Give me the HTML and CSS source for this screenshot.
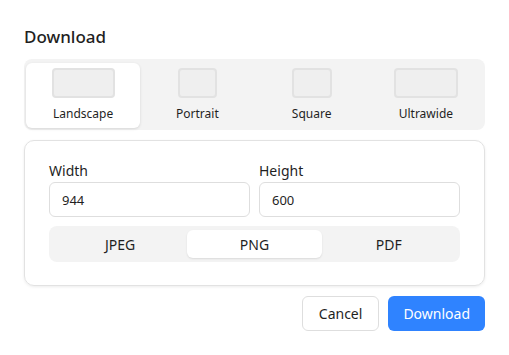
FILE: index.html
```html
<!DOCTYPE html>
<html lang="en">
  <head>
    <meta charset="utf-8">
    <title>Download</title>
    <link rel="stylesheet" href="styles.css">
  </head>

  <body>
    <div class="dialog">
      <h1 class="title">Download</h1>

      <div class="presets">
        <div class="preset active">
          <span class="shape landscape"></span>
          <span class="presetLabel">Landscape</span>
        </div>
        <div class="preset">
          <span class="shape portrait"></span>
          <span class="presetLabel">Portrait</span>
        </div>
        <div class="preset">
          <span class="shape square"></span>
          <span class="presetLabel">Square</span>
        </div>
        <div class="preset">
          <span class="shape ultrawide"></span>
          <span class="presetLabel">Ultrawide</span>
        </div>
      </div>

      <div class="card">
        <div class="fields">
          <label class="field">
            <span class="fieldLabel">Width</span>
            <input type="text" class="fieldInput" value="944">
          </label>
          <label class="field">
            <span class="fieldLabel">Height</span>
            <input type="text" class="fieldInput" value="600">
          </label>
        </div>

        <div class="formats">
          <div class="format">JPEG</div>
          <div class="format active">PNG</div>
          <div class="format">PDF</div>
        </div>
      </div>

      <div class="actions">
        <button class="btn cancel">Cancel</button>
        <button class="btn primary">Download</button>
      </div>
    </div>
  </body>
</html>
```

FILE: styles.css
```css
html {
  font-family: 'Noto Sans', 'Open Sans', sans-serif;
  color: #1f1f1f;
  background: #fff;
}

body {
  margin: 0;
}

.dialog {
  width: 461px;
  padding: 25px 24px 24px;
}

.title {
  margin: 0 0 10px;
  font-size: 17px;
  font-weight: 500;
  line-height: 24px;
}

.presets {
  display: grid;
  grid-template-columns: repeat(4, 1fr);
  padding: 4px 2px 2px;
  background: #f3f3f3;
  border-radius: 8px;
  height: 65px;
}

.preset {
  display: flex;
  flex-direction: column;
  align-items: center;
  padding-top: 5px;
  border-radius: 6px;
}

.preset.active {
  background: #fff;
  box-shadow: 0 1px 3px rgba(0, 0, 0, 0.12);
}

.shape {
  display: block;
  height: 26px;
  background: #efefef;
  border: 2px solid #e2e2e2;
  border-radius: 4px;
}

.shape.landscape { width: 59px; }
.shape.portrait { width: 35px; }
.shape.square { width: 36px; }
.shape.ultrawide { width: 60px; }

.presetLabel {
  margin-top: 8px;
  font-size: 12px;
  line-height: 16px;
}

.card {
  margin-top: 10px;
  padding: 19px 24px 23px;
  border: 1px solid #e2e2e2;
  border-radius: 10px;
  box-shadow: 0 1px 3px rgba(0, 0, 0, 0.08);
}

.fields {
  display: grid;
  grid-template-columns: 1fr 1fr;
  gap: 9px;
}

.field {
  display: flex;
  flex-direction: column;
  min-width: 0;
}

.fieldLabel {
  font-size: 14px;
  line-height: 22px;
}

.fieldInput {
  box-sizing: border-box;
  width: 100%;
  min-width: 0;
  height: 35px;
  padding: 0 12px;
  font-family: inherit;
  font-size: 13px;
  color: #1f1f1f;
  border: 1px solid #dedede;
  border-radius: 6px;
}

.formats {
  display: grid;
  grid-template-columns: repeat(3, 1fr);
  margin-top: 9px;
  padding: 4px;
  height: 28px;
  background: #f3f3f3;
  border-radius: 8px;
}

.format {
  display: flex;
  align-items: center;
  justify-content: center;
  font-size: 14px;
  border-radius: 6px;
}

.format.active {
  background: #fff;
  box-shadow: 0 1px 2px rgba(0, 0, 0, 0.1);
}

.actions {
  display: flex;
  justify-content: flex-end;
  gap: 9px;
  margin-top: 10px;
}

.btn {
  height: 35px;
  padding: 0 16px;
  font-family: inherit;
  font-size: 14px;
  border-radius: 6px;
  cursor: pointer;
}

.cancel {
  background: #fff;
  color: #1f1f1f;
  border: 1px solid #dedede;
}

.primary {
  background: #2f83ff;
  color: #fff;
  border: none;
  padding: 0 15px;
}
```
